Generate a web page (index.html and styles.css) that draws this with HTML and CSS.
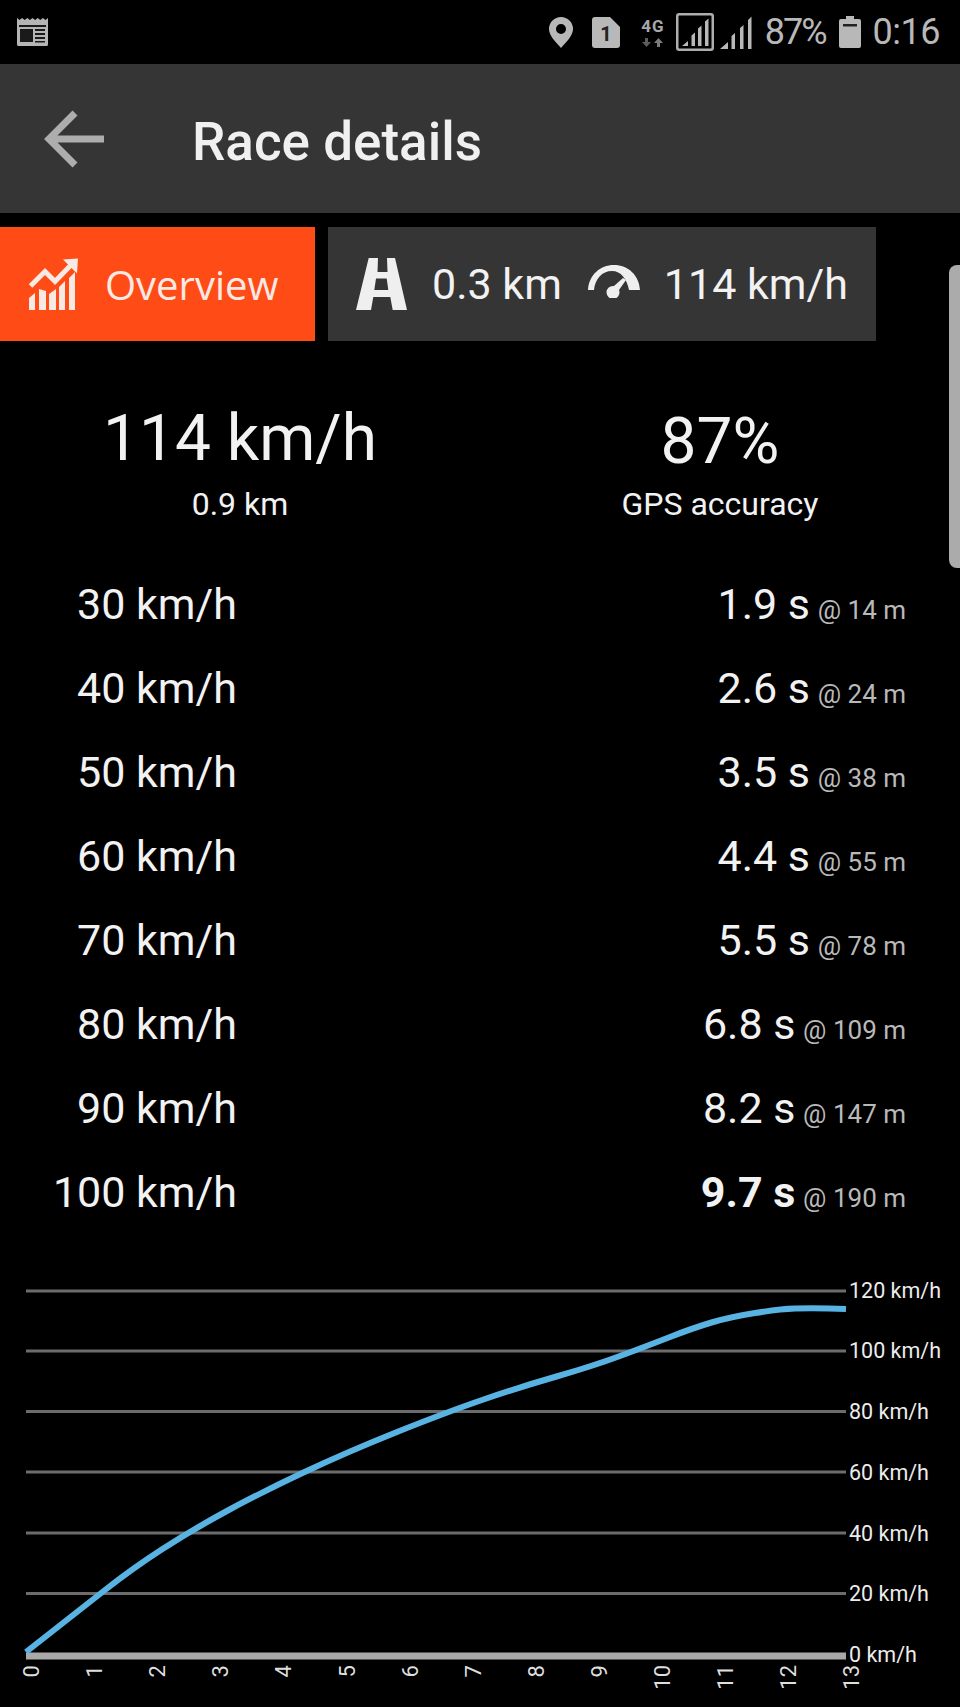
FILE: index.html
```html
<!DOCTYPE html>
<html lang="en">
  <head>
    <meta charset="UTF-8" />
    <meta name="viewport" content="width=device-width, initial-scale=1.0" />
    <title>Race details</title>
    <link rel="stylesheet" href="styles.css">
  </head>
  <body>
    <div class="App">
      <div class="statusbar">
        <svg class="ico-news" width="31" height="28" viewBox="0 0 31 28">
          <path fill="#b5b5b5" d="M0 0l2.500 2 2.600-2 2.600 2 2.600-2 2.600 2 2.600-2 2.600 2 2.600-2 2.600 2 2.600-2 2.600 2L31 0v26.500a1.500 1.500 0 0 1-1.500 1.500h-28A1.500 1.500 0 0 1 0 26.500z"/>
          <path fill="#1a1a1a" d="M2 7h27v2H2zM3 11h13v13H3zM18 11h10v2H18zM18 15h10v2H18zM18 19h10v2H18zM18 23h10v1.500H18z"/>
        </svg>
        <div class="status-right">
          <svg class="ico-pin" width="24" height="31" viewBox="0 0 24 31">
            <path fill="#b8b8b8" fill-rule="evenodd" d="M12 0a12 12 0 0 1 12 12c0 7-7 13-12 19C7 25 0 19 0 12A12 12 0 0 1 12 0zm0 7a5 5 0 1 0 0 10 5 5 0 0 0 0-10z"/>
          </svg>
          <svg class="ico-sim" width="28" height="31" viewBox="0 0 28 31">
            <path fill="#b8b8b8" d="M3 0h15l10 10v18a3 3 0 0 1-3 3H3a3 3 0 0 1-3-3V3a3 3 0 0 1 3-3z"/>
            <text x="14" y="24" class="sim-num">1</text>
          </svg>
          <svg class="ico-4g" width="28" height="36" viewBox="0 0 28 36">
            <text x="14" y="18" class="net-label">4G</text>
            <path fill="#5c5c5c" d="M6 24h3v4h3l-4.500 5L3 28h3z"/>
            <path fill="#7c7c7c" d="M18 33h3v-4h3l-4.500-5-4.500 5h3z"/>
          </svg>
          <svg class="ico-signal-box" width="38" height="38" viewBox="0 0 38 38">
            <rect x="1.250" y="1.250" width="35.500" height="35.500" rx="2" fill="none" stroke="#aeaeae" stroke-width="2.500"/>
            <path fill="#b8b8b8" d="M6 33l6-5v5zM15.500 33V22.500l3.500-3V33zM22 33V15.500l3.500-3V33zM29 33V8.500l3.500-3V33z"/>
          </svg>
          <svg class="ico-signal" width="32" height="33" viewBox="0 0 32 33">
            <path fill="#b8b8b8" d="M0 33l8-7v7zM11.500 33V20l3.500-3v16zM20 33V12l3.500-3v24zM28 33V4l3.500-3.500V33z"/>
          </svg>
          <span class="status-text pct">87%</span>
          <svg class="ico-batt" width="22" height="32" viewBox="0 0 22 32">
            <path fill="#b8b8b8" d="M7 0h8v3h5a2 2 0 0 1 2 2v25a2 2 0 0 1-2 2H2a2 2 0 0 1-2-2V5a2 2 0 0 1 2-2h5z"/>
            <path fill="#222" d="M4 8h14v2.500H4z"/>
          </svg>
          <span class="status-text">0:16</span>
        </div>
      </div>

      <div class="appbar">
        <svg class="back" width="62" height="58" viewBox="0 0 62 58">
          <path fill="none" stroke="#adadad" stroke-width="7" d="M60 29H6M31 3L5 29l26 26"/>
        </svg>
        <h1>Race details</h1>
      </div>

      <div class="scrollthumb"></div>

      <div class="tabs">
        <div class="tab tab-active">
          <svg width="50" height="52" viewBox="0 0 50 52">
            <path fill="none" stroke="#f7e9e3" stroke-width="5" d="M1.500 28L16 13.500l10 10L42 7"/>
            <path fill="#f7e9e3" d="M34 1.500l15-1-1 15zM0 40l6-5v17H0zM10 31l7 2v19h-7zM20 36l7-5v21h-7zM30 29l6-6v29h-6zM40 20l6-6v38h-6z"/>
          </svg>
          <span class="tab-text">Overview</span>
        </div>
        <div class="tab tab-info">
          <svg width="52" height="52" viewBox="0 0 52 52">
            <path fill="#efefef" fill-rule="evenodd" d="M12.700 0h9.300l-.5 14h10L31 0h8l12 52H36.700l-2.400-13H17.300L15 52H0zM20 20.500L18.300 32h14L30.700 20.500z"/>
          </svg>
          <span class="tab-val">0.3 km</span>
          <svg class="gauge" width="52" height="33" viewBox="0 0 52 33">
            <path fill="#efefef" d="M0 25C1 10 12 0 26 0s25 10 26 25H41C39 14 33 6 24 6 14 6 7 14 6 25z"/>
            <path fill="#efefef" d="M35 13l3 2-7 10a6.500 6.500 0 1 1-5-4z"/>
          </svg>
          <span class="tab-val">114 km/h</span>
        </div>
      </div>

      <div class="stats">
        <div class="stat">
          <div class="stat-big">114 km/h</div>
          <div class="stat-sub">0.9 km</div>
        </div>
        <div class="stat stat-accuracy">
          <div class="stat-big">87%</div>
          <div class="stat-sub">GPS accuracy</div>
        </div>
      </div>

      <div class="times">
        <div class="row"><span class="speed">30 km/h</span><span class="time">1.9 s <small>@ 14 m</small></span></div>
        <div class="row"><span class="speed">40 km/h</span><span class="time">2.6 s <small>@ 24 m</small></span></div>
        <div class="row"><span class="speed">50 km/h</span><span class="time">3.5 s <small>@ 38 m</small></span></div>
        <div class="row"><span class="speed">60 km/h</span><span class="time">4.4 s <small>@ 55 m</small></span></div>
        <div class="row"><span class="speed">70 km/h</span><span class="time">5.5 s <small>@ 78 m</small></span></div>
        <div class="row"><span class="speed">80 km/h</span><span class="time">6.8 s <small>@ 109 m</small></span></div>
        <div class="row"><span class="speed">90 km/h</span><span class="time">8.2 s <small>@ 147 m</small></span></div>
        <div class="row"><span class="speed">100 km/h</span><span class="time"><b>9.7 s</b> <small>@ 190 m</small></span></div>
      </div>

      <svg class="chart" width="960" height="427" viewBox="0 1280 960 427">
        <g class="grid">
          <path stroke-width="2" d="M26 1291H846"/>
          <path d="M26 1351H846M26 1411.500H846M26 1472H846M26 1533H846M26 1593.500H846"/>
          <path class="base" d="M26 1656H846"/>
        </g>
        <path class="curve" d="M26 1652L51.500 1632Q77 1612 105 1590Q133 1568 162.500 1549Q192 1530 226 1511.500Q260 1493 303.500 1472.500Q347 1452 397 1432Q447 1412 483.500 1399.500Q520 1387 556.500 1376.500Q593 1366 620 1356Q647 1346 670 1337Q693 1328 711.500 1322.500Q730 1317 755 1313Q780 1309 795 1308.500Q820 1308 846 1309"/>
        <g class="y-labels">
          <text x="849" y="1298">120 km/h</text>
          <text x="849" y="1358">100 km/h</text>
          <text x="849" y="1419">80 km/h</text>
          <text x="849" y="1480">60 km/h</text>
          <text x="849" y="1541">40 km/h</text>
          <text x="849" y="1601">20 km/h</text>
          <text x="849" y="1662">0 km/h</text>
        </g>
        <g class="x-labels">
          <text transform="translate(39 1665) rotate(-90)">0</text>
          <text transform="translate(102 1665) rotate(-90)">1</text>
          <text transform="translate(165 1665) rotate(-90)">2</text>
          <text transform="translate(228 1665) rotate(-90)">3</text>
          <text transform="translate(291 1665) rotate(-90)">4</text>
          <text transform="translate(354.500 1665) rotate(-90)">5</text>
          <text transform="translate(418 1665) rotate(-90)">6</text>
          <text transform="translate(481 1665) rotate(-90)">7</text>
          <text transform="translate(544 1665) rotate(-90)">8</text>
          <text transform="translate(607 1665) rotate(-90)">9</text>
          <text transform="translate(670 1665) rotate(-90)">10</text>
          <text transform="translate(733 1665) rotate(-90)">11</text>
          <text transform="translate(796 1665) rotate(-90)">12</text>
          <text transform="translate(859 1665) rotate(-90)">13</text>
        </g>
      </svg>
    </div>
  </body>
</html>
```

FILE: styles.css
```css
* {
  box-sizing: border-box;
}
html,
body {
  margin: 0;
  background-color: #000;
}
svg {
  flex-shrink: 0;
}
.App {
  position: relative;
  width: 960px;
  height: 1707px;
  font-family: Roboto, sans-serif;
  color: #f2f2f2;
}
.statusbar {
  height: 64px;
  display: flex;
  justify-content: space-between;
  align-items: center;
  padding: 0 20px 0 17px;
}
.status-right {
  display: flex;
  align-items: center;
}
.ico-pin {
  margin-right: 19px;
}
.ico-sim {
  margin-right: 19px;
}
.ico-4g {
  margin-right: 9px;
}
.ico-signal-box {
  margin-right: 6px;
}
.ico-signal {
  margin-right: 13px;
}
.ico-batt {
  margin: 0 12px 0 13px;
}
.status-text {
  font-size: 36px;
  color: #b8b8b8;
  letter-spacing: -0.5px;
}
.pct {
  letter-spacing: -2px;
}
.sim-num {
  font-size: 20px;
  font-weight: 700;
  text-anchor: middle;
  fill: #222;
}
.net-label {
  font-size: 17px;
  font-weight: 700;
  letter-spacing: 1px;
  text-anchor: middle;
  fill: #a8a8a8;
}
.appbar {
  height: 149px;
  display: flex;
  align-items: center;
  padding-left: 44px;
  background-color: #353535;
}
.appbar h1 {
  margin: 0 0 0 86px;
  padding-top: 6px;
  font-size: 53px;
  font-weight: 500;
  color: #f0f0f0;
}
.tabs {
  display: flex;
  gap: 13px;
  margin-top: 14px;
  height: 114px;
}
.tab {
  display: flex;
  align-items: center;
  background-color: #353535;
  font-size: 43px;
}
.tab-active {
  width: 315px;
  padding-left: 29px;
  background-color: #ff4c17;
}
.tab-info {
  width: 548px;
  padding-left: 28px;
}
.tab-text {
  margin-left: 26px;
  font-family: "Open Sans", sans-serif;
  font-size: 40px;
  color: #f7e9e3;
}
.tab-val {
  margin-left: 24px;
}
.gauge {
  margin-left: 26px;
  margin-top: -6px;
}
.scrollthumb {
  position: absolute;
  top: 265px;
  right: 0;
  width: 11px;
  height: 303px;
  border-radius: 8px 0 0 8px;
  background-color: #ababab;
}
.stats {
  display: grid;
  grid-template-columns: 480px 480px;
  margin-top: 58px;
  text-align: center;
}
.stat-big {
  font-size: 64px;
  line-height: 80px;
  margin-bottom: 7px;
}
.stat-accuracy .stat-big {
  padding-top: 5px;
  line-height: 75px;
}
.stat-sub {
  font-size: 32px;
  line-height: 36px;
}
.times {
  margin-top: 40px;
}
.row {
  display: flex;
  justify-content: space-between;
  align-items: baseline;
  height: 84px;
  line-height: 84px;
  padding: 0 54px 0 0;
  font-size: 43px;
}
.speed {
  width: 237px;
  text-align: right;
}
.time {
  white-space: nowrap;
}
.time small {
  margin-left: -3px;
  font-size: 26px;
  color: #b9b9b9;
}
.chart {
  position: absolute;
  left: 0;
  bottom: 0;
}
.grid path {
  stroke: #6c6c6c;
  stroke-width: 3;
  fill: none;
}
.grid .base {
  stroke: #a9a9a9;
  stroke-width: 7;
}
.curve {
  fill: none;
  stroke: #58b3e3;
  stroke-width: 6;
  stroke-linejoin: round;
}
.y-labels text {
  font-size: 21.500px;
  fill: #ececec;
}
.x-labels text {
  font-size: 22px;
  text-anchor: end;
  fill: #dedede;
}
```
